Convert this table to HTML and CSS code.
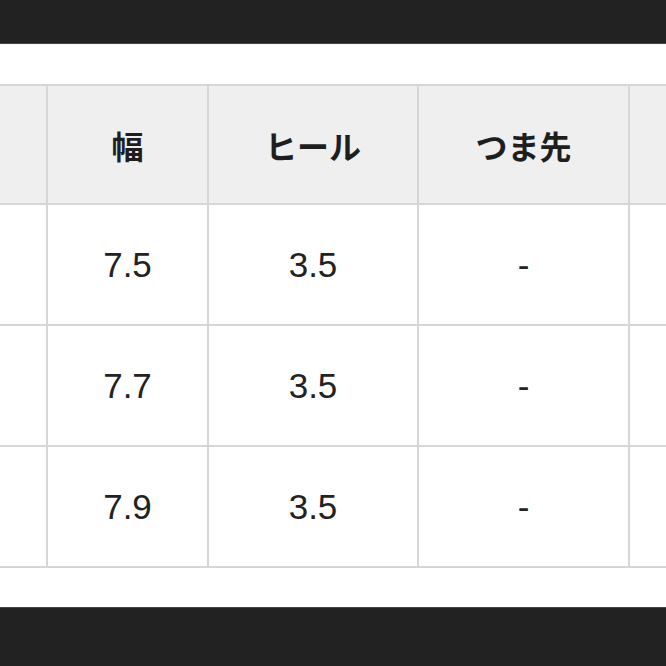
FILE: index.html
```html
<!DOCTYPE html>
<html lang="ja">
<head>
<meta charset="utf-8">
<link rel="stylesheet" href="styles.css">
</head>
<body>
<div class="bar bar-top"></div>
<main class="content">
  <table class="size-table">
    <colgroup>
      <col class="c0"><col class="c1"><col class="c2"><col class="c3"><col class="c4">
    </colgroup>
    <thead>
      <tr><th></th><th>幅</th><th>ヒール</th><th>つま先</th><th></th></tr>
    </thead>
    <tbody>
      <tr><td></td><td>7.5</td><td>3.5</td><td>-</td><td></td></tr>
      <tr><td></td><td>7.7</td><td>3.5</td><td>-</td><td></td></tr>
      <tr><td></td><td>7.9</td><td>3.5</td><td>-</td><td></td></tr>
    </tbody>
  </table>
</main>
<div class="bar bar-bottom"></div>
</body>
</html>
```
FILE: styles.css
```css
html, body {
  margin: 0;
  padding: 0;
  background: #ffffff;
  overflow: hidden;
  width: 666px;
  height: 666px;
}
body {
  display: flex;
  flex-direction: column;
  font-family: "Liberation Sans", "Noto Sans CJK JP", sans-serif;
  color: #222222;
}
.bar {
  background: #222222;
  flex: none;
}
.bar-top {
  height: 43px;
  border-bottom: 1px solid #444;
}
.bar-bottom {
  flex: 1;
  border-top: 1px solid #444;
}
.content {
  padding: 40px 0 39px;
  flex: none;
  overflow: hidden;
}
.size-table {
  border-collapse: collapse;
  table-layout: fixed;
  margin-left: -54px;
  width: 782px;
}
.c0 { width: 100px; }
.c1 { width: 161px; }
.c2 { width: 210px; }
.c3 { width: 211px; }
.c4 { width: 100px; }
.size-table th,
.size-table td {
  border: 2px solid #d6d6d6;
  height: 119px;
  padding: 0;
  text-align: center;
  vertical-align: middle;
}
.size-table th {
  height: 117px;
  background: #efefef;
  font-family: "Noto Sans CJK JP", sans-serif;
  font-weight: 700;
  font-size: 32px;
  color: #1e1e1e;
}
.size-table td {
  font-size: 35px;
  font-weight: 400;
  color: #222222;
}
```
